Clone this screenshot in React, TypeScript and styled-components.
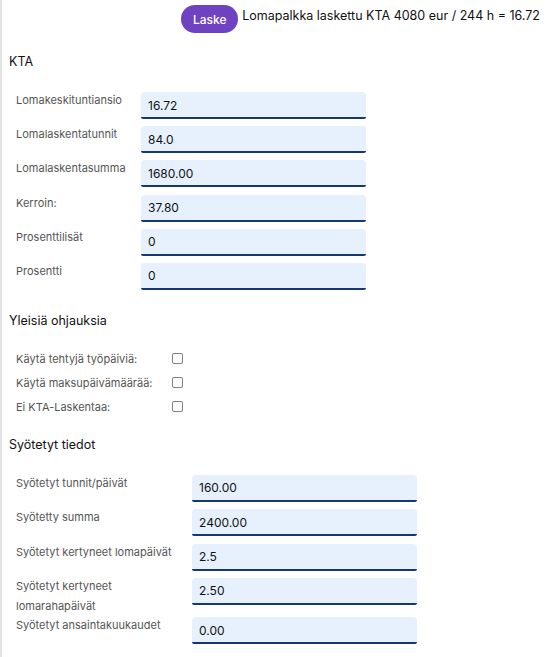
import React from 'react';
import styled, { createGlobalStyle } from 'styled-components';

const GlobalStyle = createGlobalStyle`
  html, body {
    margin: 0;
    padding: 0;
    background: #ffffff;
  }
  body {
    font-family: Inter, 'Noto Sans', sans-serif;
    color: #1a1a1a;
  }
`;

const Page = styled.div`
  border-left: 2px solid #e4e4e4;
  min-height: 657px;
  box-sizing: border-box;
`;

const Header = styled.div`
  display: flex;
  justify-content: flex-end;
  align-items: center;
  gap: 4px;
  padding: 5px 8px 0 0;
  height: 28px;
`;

const LaskeBtn = styled.button`
  background: #6f42c1;
  color: #fff;
  border: none;
  border-radius: 14px;
  width: 57px;
  height: 28px;
  font-family: inherit;
  font-size: 12px;
  font-weight: 500;
  cursor: pointer;
`;

const ResultText = styled.div`
  font-size: 12.5px;
  color: #111;
  align-self: flex-start;
  padding-top: 3px;
  white-space: nowrap;
`;

const Section = styled.section<{ $top: number }>`
  padding: ${(p) => p.$top}px 0 0 7px;
`;

const SectionTitle = styled.h3`
  margin: 0;
  font-size: 12.5px;
  font-weight: 400;
  color: #111;
  line-height: 18px;
`;

const Rows = styled.div<{ $gap: number; $top: number }>`
  display: flex;
  flex-direction: column;
  gap: ${(p) => p.$gap}px;
  margin-top: ${(p) => p.$top}px;
  padding-left: 7px;
`;

const Row = styled.div<{ $labelWidth: number }>`
  display: grid;
  grid-template-columns: ${(p) => p.$labelWidth}px 225px;
  align-items: start;
`;

const Label = styled.label`
  font-size: 11px;
  color: #555;
  line-height: 20px;
  margin: -2px 0 -6px;
  padding-right: 6px;
`;

const Input = styled.input`
  box-sizing: border-box;
  width: 100%;
  height: 27px;
  padding: 1px 7px 0;
  border: none;
  border-bottom: 2px solid #14386f;
  border-radius: 4px 4px 2px 2px;
  background: #e6f1fd;
  font-family: inherit;
  font-size: 12px;
  color: #111;
  outline: none;
`;

const CheckRow = styled.label`
  display: grid;
  grid-template-columns: 156px 12px;
  align-items: center;
  font-size: 11px;
  color: #555;
  height: 24px;
`;

const Box = styled.input.attrs({ type: 'checkbox' })`
  appearance: none;
  width: 11px;
  height: 11px;
  margin: 0;
  border: 1px solid #808080;
  border-radius: 2px;
  background: #fff;
`;

const ktaRows = [
  ['Lomakeskituntiansio', '16.72'],
  ['Lomalaskentatunnit', '84.0'],
  ['Lomalaskentasumma', '1680.00'],
  ['Kerroin:', '37.80'],
  ['Prosenttilisät', '0'],
  ['Prosentti', '0'],
];

const checks = ['Käytä tehtyjä työpäiviä:', 'Käytä maksupäivämäärää:', 'Ei KTA-Laskentaa:'];

const inputRows = [
  ['Syötetyt tunnit/päivät', '160.00'],
  ['Syötetty summa', '2400.00'],
  ['Syötetyt kertyneet lomapäivät', '2.5'],
  ['Syötetyt kertyneet lomarahapäivät', '2.50'],
  ['Syötetyt ansaintakuukaudet', '0.00'],
];

export default function App() {
  return (
    <Page>
      <GlobalStyle />
      <Header>
        <LaskeBtn>Laske</LaskeBtn>
        <ResultText>Lomapalkka laskettu KTA 4080 eur / 244 h = 16.72</ResultText>
      </Header>

      <Section $top={20}>
        <SectionTitle>KTA</SectionTitle>
        <Rows $gap={7.2} $top={21}>
          {ktaRows.map(([l, v]) => (
            <Row key={l} $labelWidth={125}>
              <Label>{l}</Label>
              <Input defaultValue={v} />
            </Row>
          ))}
        </Rows>
      </Section>

      <Section $top={22}>
        <SectionTitle>Yleisiä ohjauksia</SectionTitle>
        <Rows $gap={0} $top={17}>
          {checks.map((c) => (
            <CheckRow key={c}>
              <span>{c}</span>
              <Box />
            </CheckRow>
          ))}
        </Rows>
      </Section>

      <Section $top={17}>
        <SectionTitle>Syötetyt tiedot</SectionTitle>
        <Rows $gap={7.3} $top={21}>
          {inputRows.map(([l, v]) => (
            <Row key={l} $labelWidth={176}>
              <Label>{l}</Label>
              <Input defaultValue={v} />
            </Row>
          ))}
        </Rows>
      </Section>
    </Page>
  );
}
